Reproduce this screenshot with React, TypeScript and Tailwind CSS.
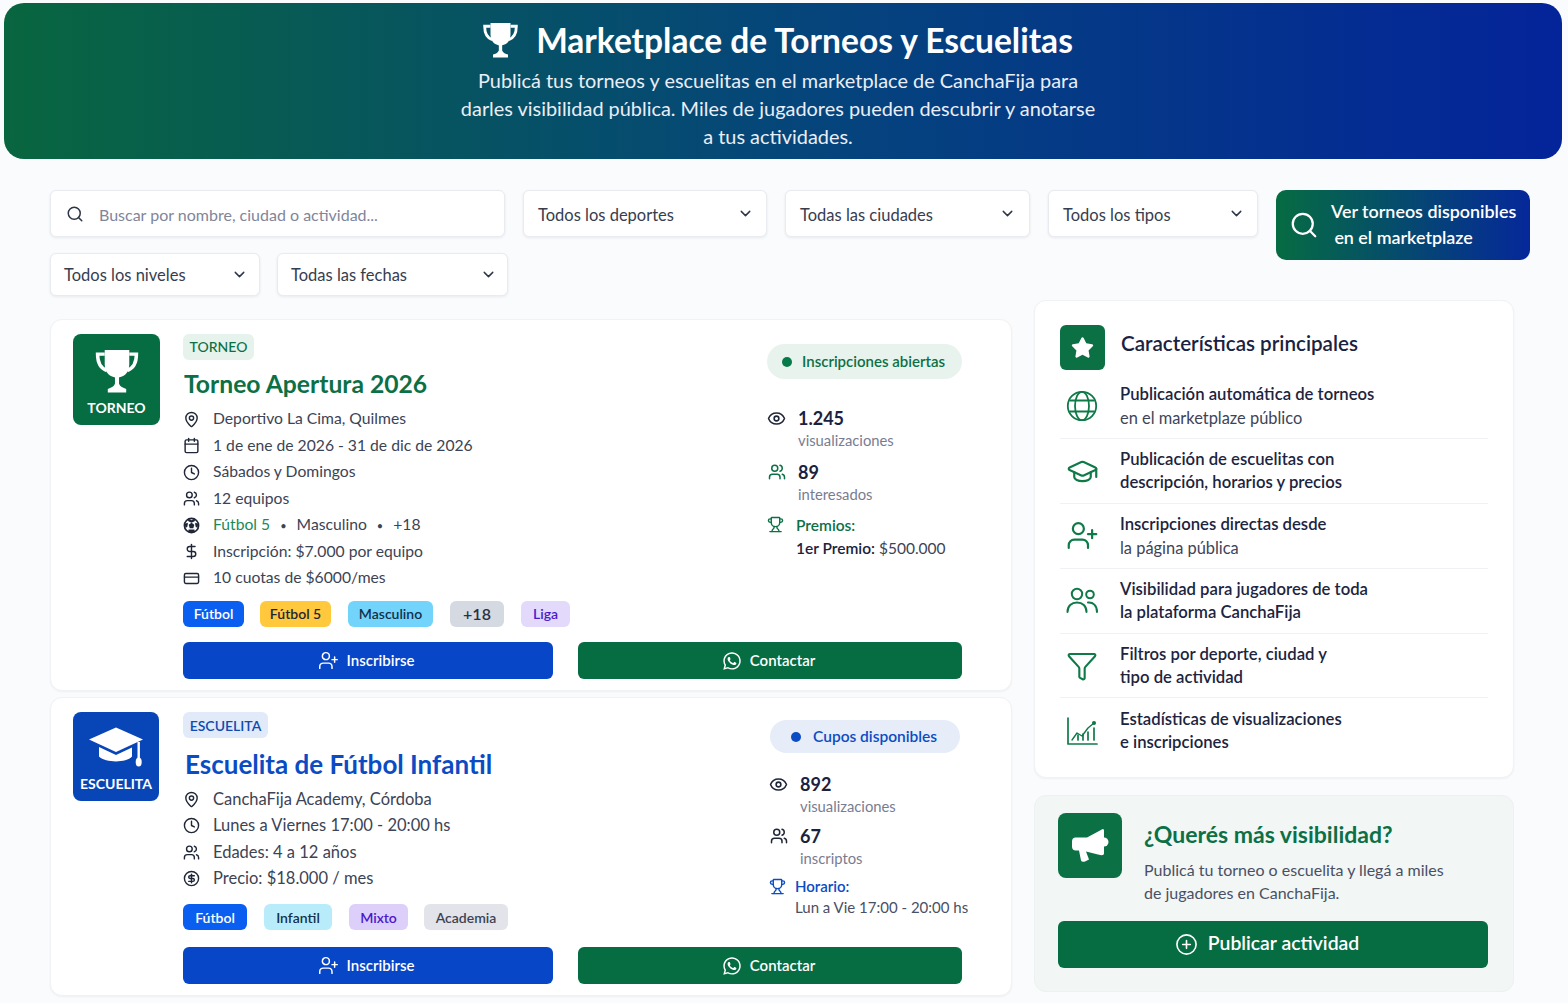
import React from "react";
import {
  Search, ChevronDown, MapPin, Calendar, Clock, Users, DollarSign, CreditCard, Eye, UserPlus, Trophy,
  GraduationCap, Funnel, CirclePlus, CircleDollarSign,
} from "lucide-react";
import { FaWhatsapp, FaStar } from "react-icons/fa";

const SolidTrophy = ({ className }: { className?: string }) => (
  <svg viewBox="3 3 42 43" className={className} fill="none">
    <path d="M12 4h24v14c0 8-5 13-12 13S12 26 12 18z" fill="currentColor" />
    <path d="M12 8H5c0 9 3 14 9 16M36 8h7c0 9-3 14-9 16" stroke="currentColor" strokeWidth="3.4" />
    <path d="M22 30h4v7c1 3 4 4 7 5v3.5H15V42c3-1 6-2 7-5z" fill="currentColor" />
  </svg>
);

const Cap = ({ className }: { className?: string }) => (
  <svg viewBox="0 0 56 40" className={className} fill="currentColor">
    <path d="M28 0.5 L55 12.5 L28 25 L1 12.5 Z" />
    <path d="M11 20 L28 28 L44 20.5 V29.5 C38 36 18 36 11 29.5 Z" />
    <rect x="49.5" y="15" width="2.4" height="16" />
    <ellipse cx="50.7" cy="35" rx="3" ry="4.6" />
  </svg>
);

const Ball = ({ size }: { size: number }) => (
  <svg width={size} height={size} viewBox="0 0 24 24" fill="currentColor">
    <circle cx="12" cy="12" r="10" fill="none" stroke="currentColor" strokeWidth="2.4" />
    <path d="M12 8l4 3-1.5 4.8h-5L8 11z" />
    <path d="M8 2.5l4 2 4-2 1 3-5 2.5-5-2.5zM2.5 10l3.5-2 1 1-1 5-2.5 1zM21.5 10l-3.5-2-1 1 1 5 2.5 1zM7 21l1-3.5h8l1 3.5-5 1z" />
  </svg>
);

const Globe2 = () => (
  <svg width="32" height="32" viewBox="0 0 32 32" fill="none" stroke="currentColor" strokeWidth="1.8">
    <circle cx="16" cy="16" r="14.2" />
    <ellipse cx="16" cy="16" rx="7" ry="14.2" />
    <path d="M3.5 10.5h25M3.5 21.5h25" />
  </svg>
);

const TwoUsers = () => (
  <svg width="32" height="28" viewBox="0 0 32 28" fill="none" stroke="currentColor" strokeWidth="2" strokeLinecap="round">
    <circle cx="11" cy="7" r="5.2" />
    <circle cx="24" cy="7.5" r="3.8" />
    <path d="M1.5 25c0-6 4-9.5 9.5-9.5s9.5 3.5 9.5 9.5" />
    <path d="M22 15.5c5-.5 9 3 9 9.5" />
  </svg>
);

const Megaphone = () => (
  <svg width="64" height="65" viewBox="0 0 64 64" fill="currentColor">
    <path d="M17 24 Q14 24.5 14 28 V33 Q14 37 18 37 L21 37 L23 47 Q24 49 27 48 L31 46 L28 38 L40 41 Q46 43 46 40 V17 Q46 14 42 17 L29 24 Z" />
    <circle cx="46" cy="28.5" r="4.5" />
  </svg>
);

const Select = ({ label, className, textClass }: { label: string; className: string; textClass: string }) => (
  <div className={`flex items-center justify-between rounded-md border border-[#e8ebf0] bg-white text-[16.5px] text-[#363d4f] shadow-[0_1px_3px_rgba(20,30,60,0.08)] ${className}`}>
    <span className={textClass}>{label}</span>
    <ChevronDown size={17} strokeWidth={2} className="text-[#2d3548]" />
  </div>
);

const Row = ({ icon, children, large }: { icon: React.ReactNode; children: React.ReactNode; large?: boolean }) => (
  <div className={`flex h-[26.5px] items-center gap-[13px] text-[#3c4355] ${large ? "text-[16.5px]" : "text-[15.7px]"}`}>
    <span className="flex w-[17px] justify-center text-[#1f2638]">{icon}</span>
    <span>{children}</span>
  </div>
);

const Tag = ({ children, className }: { children: React.ReactNode; className: string }) => (
  <span className={`flex h-[26px] items-center justify-center rounded-md text-[14px] font-semibold ${className}`}>{children}</span>
);

const Buttons = () => (
  <div className="flex gap-[25px]">
    <div className="flex h-[37px] w-[370px] items-center justify-center gap-2 rounded-md bg-[#0846c8] pr-[4px] text-[15px] font-semibold text-white">
      <UserPlus size={21} strokeWidth={1.7} /> Inscribirse
    </div>
    <div className="flex h-[37px] w-[384px] items-center justify-center gap-2 rounded-md bg-[#066c42] pr-[3px] text-[15px] font-semibold text-white">
      <FaWhatsapp size={20} /> Contactar
    </div>
  </div>
);

const Stat = ({ icon, value, label, className }: { icon: React.ReactNode; value: string; label: string; className?: string }) => (
  <div className={`flex gap-[12px] ${className ?? ""}`}>
    <span className="flex h-[24px] w-[19px] items-center justify-center">{icon}</span>
    <div>
      <div className="text-[18px] leading-[24px] font-bold text-[#1a2240]">{value}</div>
      <div className="text-[14.8px] leading-[20px] text-[#777d91]">{label}</div>
    </div>
  </div>
);

const Feature = ({ icon, a, b, boldB, last }: { icon: React.ReactNode; a: string; b: string; boldB?: boolean; last?: boolean }) => (
  <div className={`flex h-[64.8px] items-center ${last ? "" : "border-b border-[#eff1f4]"}`}>
    <span className="flex w-[60px] justify-start pl-[6px] text-[#0f7a48]">{icon}</span>
    <div className="leading-[23px] text-[#1c2440]">
      <div className="text-[16.7px] font-semibold">{a}</div>
      <div className={boldB ? "text-[16.7px] font-semibold" : "text-[16.4px] text-[#3d4459]"}>{b}</div>
    </div>
  </div>
);

const ChartIcon = () => (
  <svg width="32" height="30" viewBox="0 0 32 30" fill="none" stroke="currentColor" strokeWidth="1.7" strokeLinecap="round" strokeLinejoin="round">
    <path d="M2 2v26h29" />
    <path d="M6 24l5-7 5 3 6-8 6-5" strokeWidth="1.4" />
    <path d="M12 24v-5M17 24v-6M22 24v-8M28 24V12" />
    <circle cx="28" cy="7" r="1.2" fill="currentColor" />
  </svg>
);

export default function App() {
  return (
    <div className="h-[1003px] w-[1568px] overflow-hidden bg-[#fafbfc] pt-[3px] font-['Lato','Noto_Sans',sans-serif]">
      <header className="mx-[4px] flex h-[156px] w-[1558px] flex-col items-center rounded-[20px] bg-linear-to-r/srgb from-[#08663f] via-[#05467a] to-[#04249a] pt-[16px] pr-[10px] text-white">
        <div className="flex items-center gap-[18px]">
          <SolidTrophy className="h-[36px] w-[35px]" />
          <h1 className="text-[33.5px] leading-[42px] font-bold">Marketplace de Torneos y Escuelitas</h1>
        </div>
        <p className="mt-[5px] w-[640px] text-center text-[19.9px] leading-[28px] text-[#e9eef7]">
          Publicá tus torneos y escuelitas en el marketplace de CanchaFija para darles visibilidad pública. Miles de jugadores pueden descubrir y anotarse a tus actividades.
        </p>
      </header>

      <section className="mt-[31px] ml-[50px] flex w-[1480px] gap-[18px]">
        <div className="flex w-[1208px] flex-wrap content-start gap-x-[18px] gap-y-[16px]">
          <div className="flex h-[47px] w-[455px] items-center gap-[15px] rounded-md border border-[#e8ebf0] bg-white pl-[15px] text-[16px] text-[#80859a] shadow-[0_1px_3px_rgba(20,30,60,0.08)]">
            <Search size={18} className="text-[#2d3548]" /> <span className="pt-[2px]">Buscar por nombre, ciudad o actividad...</span>
          </div>
          <Select label="Todos los deportes" textClass="pt-[4px]" className="h-[47px] w-[244px] pr-[12px] pl-[14px]" />
          <Select label="Todas las ciudades" textClass="pt-[4px]" className="h-[47px] w-[245px] pr-[13px] pl-[14px]" />
          <Select label="Todos los tipos" textClass="pt-[4px]" className="h-[47px] w-[210px] pr-[12px] pl-[14px]" />
          <Select label="Todos los niveles" textClass="pt-[2px]" className="h-[43px] w-[210px] pr-[11px] pl-[13px]" />
          <Select label="Todas las fechas" textClass="pt-[2px]" className="-ml-px h-[43px] w-[231px] pr-[10px] pl-[13px]" />
        </div>
        <div className="flex h-[70px] w-[254px] items-center gap-[12px] rounded-[10px] bg-linear-to-r/srgb from-[#066c42] to-[#05289a] pl-[13px] text-white">
          <Search size={30} strokeWidth={1.8} />
          <div className="-mt-[2px] text-center text-[17.9px] leading-[26px] font-semibold whitespace-nowrap">
            Ver torneos disponibles
            <br />
            <span className="-ml-[40px]">en el marketplaze</span>
          </div>
        </div>
      </section>

      <main className="ml-[50px] flex w-[1464px] justify-between">
        <div className="mt-[23px] w-[962px]">
          {/* Torneo */}
          <article className="flex h-[372px] flex-col rounded-xl border border-[#f0f2f5] bg-white pt-[14px] pl-[22px] shadow-[0_1px_2px_rgba(20,30,60,0.05)]">
            <div className="flex flex-1">
              <div className="flex h-[91px] w-[87px] flex-col items-center rounded-lg bg-[#066c42] pt-[15px] text-white">
                <SolidTrophy className="h-[44px] w-[44px]" />
                <span className="mt-[6px] text-[14px] leading-[18px] font-bold">TORNEO</span>
              </div>
              <div className="ml-[23px] flex-1">
                <span className="flex h-[26px] w-[71px] items-center justify-center rounded-md bg-[#e6f2ec] pb-px text-[14px] font-medium text-[#0c7046]">TORNEO</span>
                <h2 className="mt-[10px] mb-[8px] pl-px text-[24.7px] leading-[28px] font-bold text-[#0c7046]">Torneo Apertura 2026</h2>
                <Row icon={<MapPin size={17} />}>Deportivo La Cima, Quilmes</Row>
                <Row icon={<Calendar size={17} />}>1 de ene de 2026 - 31 de dic de 2026</Row>
                <Row icon={<Clock size={17} />}>Sábados y Domingos</Row>
                <Row icon={<Users size={17} />}>12 equipos</Row>
                <Row icon={<Ball size={17} />}>
                  <span className="text-[#1c8a58]">Fútbol 5</span>
                  <span className="mx-[10px] text-[11px]">•</span>Masculino<span className="mx-[10px] text-[11px]">•</span>+18
                </Row>
                <Row icon={<DollarSign size={17} />}>Inscripción: $7.000 por equipo</Row>
                <Row icon={<CreditCard size={17} />}>10 cuotas de $6000/mes</Row>
                <div className="mt-[9px] flex gap-[17px]">
                  <Tag className="-mr-px w-[61px] bg-[#0b5ff0] text-white">Fútbol</Tag>
                  <Tag className="w-[71px] bg-[#ffc83d] text-[#1f2638]">Fútbol 5</Tag>
                  <Tag className="w-[85px] bg-[#72d4fb] text-[#14304a]">Masculino</Tag>
                  <Tag className="w-[54px] bg-[#d5d9e2] text-[16px] text-[#2a3146]">+18</Tag>
                  <Tag className="w-[49px] bg-[#e2d9fb] text-[#4a18cc]">Liga</Tag>
                </div>
              </div>
              <div className="mt-[10px] mr-[49px] w-[195px] shrink-0">
                <div className="flex h-[35px] items-center gap-[10px] rounded-full bg-[#e8f3ee] pl-[15px] text-[15px] font-semibold text-[#0c7046]">
                  <span className="h-[10px] w-[10px] rounded-full bg-[#067a48]" /> Inscripciones abiertas
                </div>
                <Stat className="mt-[27px]" icon={<Eye size={19} className="text-[#1f2638]" />} value="1.245" label="visualizaciones" />
                <Stat className="mt-[10px]" icon={<Users size={18} className="text-[#0c7046]" />} value="89" label="interesados" />
                <div className="mt-[10px] flex gap-[12px]">
                  <Trophy size={17} className="mt-[2px] text-[#0c7046]" />
                  <div className="text-[15.5px] leading-[23px]">
                    <div className="font-semibold text-[#0c7046]">Premios:</div>
                    <div className="whitespace-nowrap text-[#3c4355]"><b className="font-semibold text-[#1a2240]">1er Premio:</b> $500.000</div>
                  </div>
                </div>
              </div>
            </div>
            <div className="mb-[11px] ml-[110px]"><Buttons /></div>
          </article>

          {/* Escuelita */}
          <article className="mt-[6px] flex h-[299px] flex-col rounded-xl border border-[#f0f2f5] bg-white pt-[14px] pl-[22px] shadow-[0_1px_2px_rgba(20,30,60,0.05)]">
            <div className="flex flex-1">
              <div className="flex h-[89px] w-[86px] flex-col items-center rounded-lg bg-[#0846b8] pt-[15px] text-white">
                <Cap className="h-[40px] w-[56px]" />
                <span className="mt-[8px] text-[14px] leading-[18px] font-bold">ESCUELITA</span>
              </div>
              <div className="ml-[24px] flex-1">
                <span className="flex h-[26px] w-[85px] items-center justify-center rounded-md bg-[#e1eaf8] text-[14px] font-semibold text-[#0f4bb0]">ESCUELITA</span>
                <h2 className="mt-[11px] mb-[7px] pl-[2px] text-[26px] leading-[30px] font-bold text-[#0b4cc4]">Escuelita de Fútbol Infantil</h2>
                <Row large icon={<MapPin size={17} />}>CanchaFija Academy, Córdoba</Row>
                <Row large icon={<Clock size={17} />}>Lunes a Viernes 17:00 - 20:00 hs</Row>
                <Row large icon={<Users size={17} />}>Edades: 4 a 12 años</Row>
                <Row large icon={<CircleDollarSign size={17} />}>Precio: $18.000 / mes</Row>
                <div className="mt-[12px] flex gap-[17px]">
                  <Tag className="w-[64px] bg-[#0b5ff0] text-white">Fútbol</Tag>
                  <Tag className="w-[68px] bg-[#b8ecfb] text-[#14304a]">Infantil</Tag>
                  <Tag className="w-[59px] bg-[#dccffa] text-[#4a18cc]">Mixto</Tag>
                  <Tag className="-ml-px w-[84px] bg-[#e2e4e9] font-medium text-[#3c4355]">Academia</Tag>
                </div>
              </div>
              <div className="mt-[8px] mr-[42px] w-[200px] shrink-0">
                <div className="ml-[1px] flex h-[33px] w-[190px] items-center gap-[12px] rounded-full bg-[#e6edf9] pl-[21px] text-[15.5px] font-semibold text-[#0b4cc4]">
                  <span className="h-[10px] w-[10px] rounded-full bg-[#0b4cc4]" /> Cupos disponibles
                </div>
                <Stat className="mt-[19px]" icon={<Eye size={19} className="text-[#1f2638]" />} value="892" label="visualizaciones" />
                <Stat className="mt-[8px]" icon={<Users size={18} className="text-[#1f2638]" />} value="67" label="inscriptos" />
                <div className="mt-[8px] flex gap-[9px]">
                  <Trophy size={17} className="mt-[2px] text-[#0b4cc4]" />
                  <div className="text-[15px] leading-[21px]">
                    <div className="font-semibold text-[#0b4cc4]">Horario:</div>
                    <div className="whitespace-nowrap text-[#4a5064]">Lun a Vie 17:00 - 20:00 hs</div>
                  </div>
                </div>
              </div>
            </div>
            <div className="mb-[11px] ml-[110px]"><Buttons /></div>
          </article>
        </div>

        <aside className="mt-[4px] w-[480px]">
          <div className="h-[478px] rounded-xl border border-[#f0f2f5] bg-white px-[25px] pt-[24px] shadow-[0_1px_2px_rgba(20,30,60,0.05)]">
            <div className="mb-[4.5px] flex items-center gap-[16px]">
              <span className="flex h-[45px] w-[45px] items-center justify-center rounded-md bg-[#0b7044] text-white"><FaStar size={23} /></span>
              <h3 className="-mt-[9px] text-[20.6px] font-semibold text-[#1a2240]">Características principales</h3>
            </div>
            <Feature icon={<Globe2 />} a="Publicación automática de torneos" b="en el marketplaze público" />
            <Feature icon={<GraduationCap size={33} strokeWidth={1.6} />} a="Publicación de escuelitas con" b="descripción, horarios y precios" boldB />
            <Feature icon={<UserPlus size={33} strokeWidth={1.6} />} a="Inscripciones directas desde" b="la página pública" />
            <Feature icon={<TwoUsers />} a="Visibilidad para jugadores de toda" b="la plataforma CanchaFija" boldB />
            <Feature icon={<Funnel size={32} strokeWidth={1.6} />} a="Filtros por deporte, ciudad y" b="tipo de actividad" boldB />
            <Feature icon={<ChartIcon />} a="Estadísticas de visualizaciones" b="e inscripciones" boldB last />
          </div>
          <div className="mt-[17px] h-[197px] rounded-xl border border-[#edf1f1] bg-[#f2f6f5] pt-[17px] pr-[25px] pl-[23px]">
            <div className="flex">
              <span className="flex h-[65px] w-[64px] shrink-0 items-center justify-center rounded-lg bg-[#0b7044] text-white"><Megaphone /></span>
              <div className="ml-[22px]">
                <h3 className="mt-[6px] text-[23px] leading-[30px] font-bold text-[#0c7046]">¿Querés más visibilidad?</h3>
                <p className="mt-[9px] text-[16px] leading-[23px] text-[#4a5064]">Publicá tu torneo o escuelita y llegá a miles<br />de jugadores en CanchaFija.</p>
              </div>
            </div>
            <div className="mt-[17px] flex h-[47px] items-center justify-center gap-[10px] rounded-md bg-[#066c42] pr-[12px] pb-[3px] text-[19.4px] font-semibold text-white">
              <CirclePlus size={23} strokeWidth={1.7} className="mt-[3px]" /> Publicar actividad
            </div>
          </div>
        </aside>
      </main>
    </div>
  );
}
